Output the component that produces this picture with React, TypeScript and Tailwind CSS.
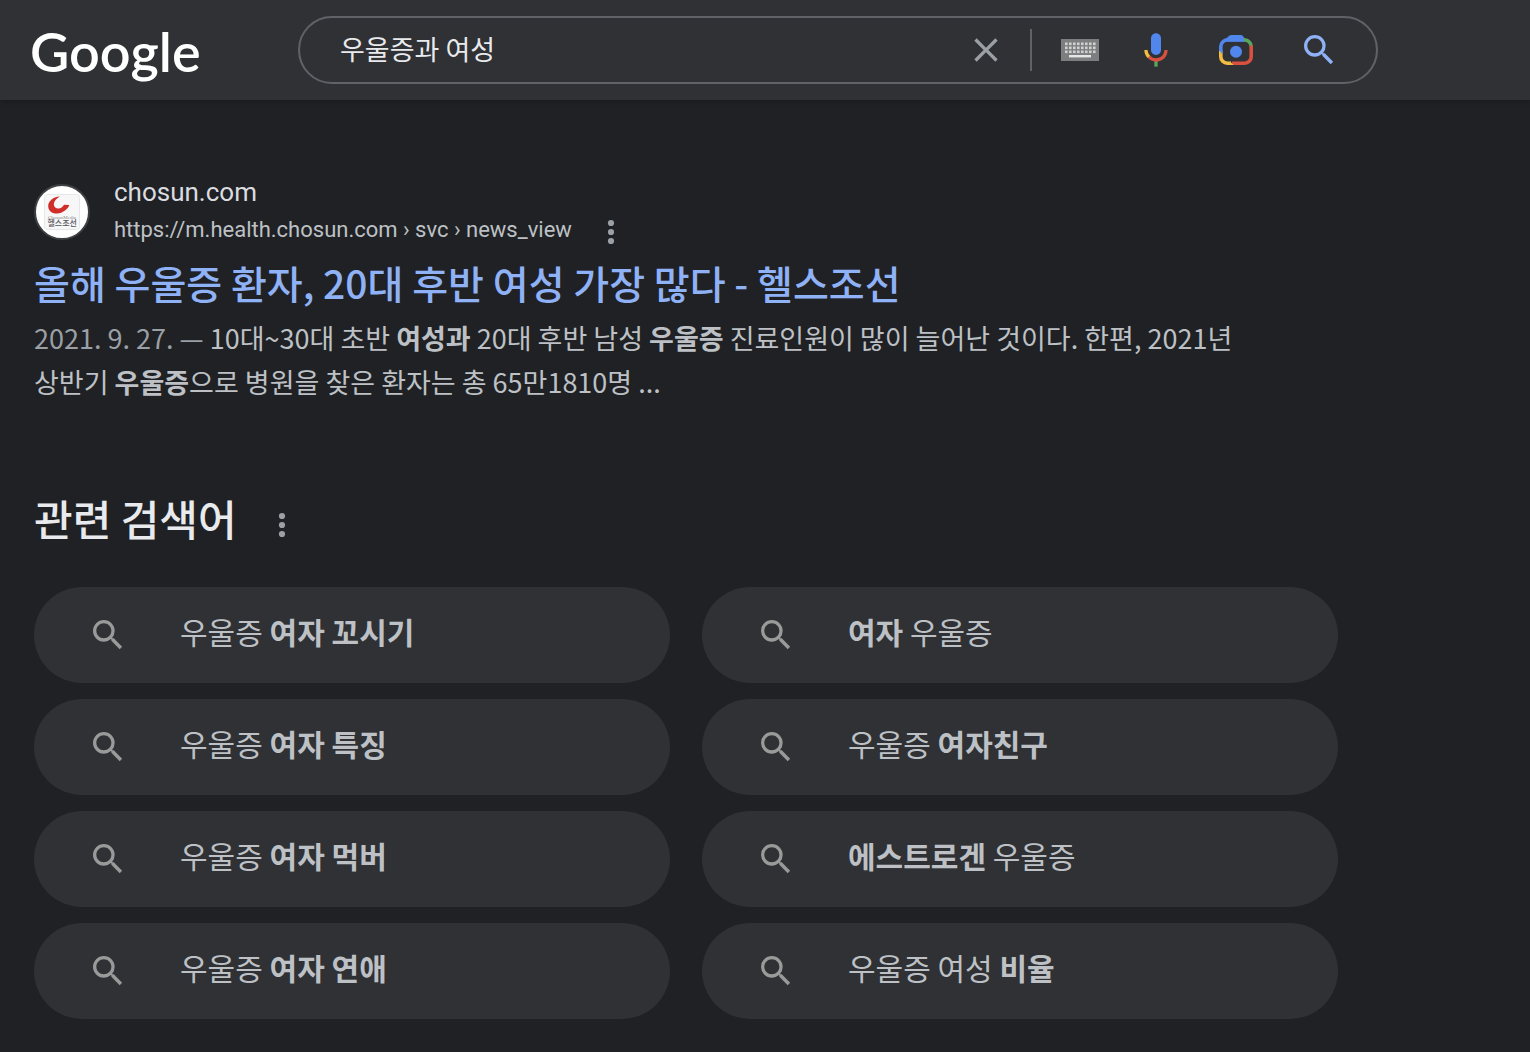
import React, { useState } from 'react';

interface Part {
  text: string;
  bold?: boolean;
}

const related: Part[][] = [
  [{ text: '우울증 ' }, { text: '여자 꼬시기', bold: true }],
  [{ text: '여자', bold: true }, { text: ' 우울증' }],
  [{ text: '우울증 ' }, { text: '여자 특징', bold: true }],
  [{ text: '우울증 ' }, { text: '여자친구', bold: true }],
  [{ text: '우울증 ' }, { text: '여자 먹버', bold: true }],
  [{ text: '에스트로겐', bold: true }, { text: ' 우울증' }],
  [{ text: '우울증 ' }, { text: '여자 연애', bold: true }],
  [{ text: '우울증 여성 ' }, { text: '비율', bold: true }],
];

const SearchIcon = ({ className }: { className: string }) => (
  <svg viewBox="0 0 24 24" fill="currentColor" aria-hidden="true" className={className}>
    <path d="M15.5 14h-.79l-.28-.27A6.471 6.471 0 0 0 16 9.5 6.5 6.5 0 1 0 9.5 16c1.61 0 3.09-.59 4.23-1.57l.27.28v.79l5 4.99L20.49 19l-4.99-5zm-6 0C7.01 14 5 11.99 5 9.5S7.01 5 9.5 5 14 7.01 14 9.5 11.99 14 9.5 14z" />
  </svg>
);

const CloseIcon = () => (
  <svg viewBox="0 0 24 24" fill="currentColor" aria-hidden="true" className="size-10">
    <path d="M19 6.41L17.59 5 12 10.59 6.41 5 5 6.41 10.59 12 5 17.59 6.41 19 12 13.41 17.59 19 19 17.59 13.41 12z" />
  </svg>
);

const KeyboardIcon = () => (
  <svg viewBox="0 0 38 22" aria-hidden="true" className="h-[22px] w-[38px]">
    <rect width="38" height="22" fill="#7d7e7f" />
    {[4, 8, 12].map((y) =>
      [4, 8, 12, 16, 20, 24, 28, 32].map((x) => (
        <rect key={`${x}-${y}`} x={x} y={y - 0.5} width="2.6" height="2.6" fill="#d0d0d0" />
      ))
    )}
    <rect x="8" y="16" width="22" height="2.4" fill="#e6e6e6" />
  </svg>
);

const MicIcon = () => (
  <svg viewBox="0 0 24 24" aria-hidden="true" className="size-10">
    <path fill="#5186ec" d="M12 15c1.66 0 3-1.31 3-2.97V5.01C15 3.35 13.66 2 12 2S9 3.34 9 5.01v7.02C9 13.69 10.34 15 12 15z" />
    <path fill="#58a55c" d="M11 18.08h2V22h-2z" />
    <path fill="#f2be42" d="M7.05 16.87C5.78 15.54 5 14.04 5 12h2c0 1.45.56 2.42 1.47 3.38v.32l-1.15 1.18z" />
    <path fill="#d85140" d="M12 16.93a4.97 5.25 0 0 1-3.54-1.55l-1.41 1.49C8.31 18.21 10.07 19 12 19c3.87 0 6.99-2.92 6.99-7H17c0 2.92-2.24 4.93-5 4.93z" />
  </svg>
);

const LensIcon = () => (
  <svg viewBox="0 0 40 40" fill="none" strokeWidth="3.6" aria-hidden="true" className="size-10">
    <path stroke="#5186ec" d="M4.8 21.5V16.5a6.5 6.5 0 0 1 6.5-6.5H28" />
    <path fill="#5186ec" d="M9.5 9l4-3.4Q14.3 5 15.3 5h9.4q1 0 1.8.6L31 11.5H9.5z" />
    <path stroke="#58a55c" d="M28 10h.7a6.5 6.5 0 0 1 6.5 6.5" />
    <path fill="#58a55c" d="M27 8.2h2l3.5 3.3h-2.5z" />
    <path stroke="#d85140" d="M35.2 15.5V26.7a6.5 6.5 0 0 1-6.5 6.5H16" />
    <path stroke="#f2be42" d="M4.8 21V26.7a6.5 6.5 0 0 0 6.5 6.5H15" />
    <path fill="#5186ec" d="M3 20h3.6v4.5z" />
    <path fill="#f2be42" d="M14 31.4l3.6 3.6H14z" />
    <circle cx="20" cy="21.7" r="6" fill="#5186ec" />
  </svg>
);

const MoreButton = ({ label }: { label: string }) => (
  <button type="button" aria-label={label} className="flex h-8 w-6 items-center justify-center pt-1 text-[#9aa0a6]">
    <svg viewBox="0 0 8 26" fill="currentColor" aria-hidden="true" className="h-[26px] w-2 shrink-0">
      <circle cx="4" cy="4" r="3.1" />
      <circle cx="4" cy="13" r="3.1" />
      <circle cx="4" cy="22" r="3.1" />
    </svg>
  </button>
);

const Favicon = () => (
  <svg viewBox="0 0 56 56" aria-hidden="true" className="size-14 shrink-0">
    <circle cx="28" cy="28" r="27" fill="#fff" stroke="#3c4043" strokeWidth="2" />
    <rect x="10.5" y="10.5" width="35" height="35" rx="3" fill="#f7f7f8" stroke="#e6e7ea" />
    <path fill="#cf2e2b" d="M26 12.5C18.5 13 14.2 17.5 14.2 22c0 5 4 7.8 9 7.5 5.5-.3 10.5-4 12.1-8.5l-5.3-.2c-1.3 2.6-3.7 4-6.2 3.7-2.9-.3-4.3-2.3-3.9-4.9.4-2.7 2.600-5.500 6.100-7.100z" />
    <text x="14" y="35" fontSize="5" fill="#8a8a8a" fontFamily="Liberation Serif, serif">ChosunMedia</text>
    <text x="13.5" y="42" fontSize="8" fontWeight="500" fill="#55565a" fontFamily="Noto Sans CJK KR, sans-serif">헬스조선</text>
  </svg>
);

const Header = () => {
  const [query, setQuery] = useState('우울증과 여성');

  return (
    <header className="flex h-[100px] items-center bg-[#303134] pl-[30px] pr-8 shadow-md">
      <a href="#" className="w-[268px] shrink-0 pt-1 font-['Lato',sans-serif] text-[54px] leading-[72px] font-semibold text-white">
        Google
      </a>
      <form
        role="search"
        onSubmit={(e) => e.preventDefault()}
        className="flex h-[68px] max-w-[1080px] flex-1 items-center rounded-full border-2 border-[#5f6368] pl-10 pr-[37px]"
      >
        <input
          type="text"
          aria-label="검색"
          value={query}
          onChange={(e) => setQuery(e.target.value)}
          className="h-10 min-w-0 flex-1 bg-transparent pb-1 text-[27px] leading-9 text-[#e8eaed] outline-none"
        />
        <button type="button" aria-label="지우기" onClick={() => setQuery('')} className="text-[#9aa0a6]">
          <CloseIcon />
        </button>
        <div className="mr-[29px] ml-6 h-[42px] w-0.5 bg-[#5f6368]" />
        <button type="button" aria-label="입력 도구" className="mr-[37px]">
          <KeyboardIcon />
        </button>
        <div className="flex items-center gap-10">
          <button type="button" aria-label="음성 검색">
            <MicIcon />
          </button>
          <button type="button" aria-label="이미지로 검색">
            <LensIcon />
          </button>
        </div>
        <button type="submit" aria-label="Google 검색" className="ml-[43px] text-[#8fb1f5]">
          <SearchIcon className="size-10" />
        </button>
      </form>
    </header>
  );
};

const Result = () => (
  <article>
    <div className="flex items-center gap-6">
      <Favicon />
      <div className="pb-1 font-['Roboto',sans-serif]">
        <div className="text-[26px] leading-10 text-[#dadce0]">chosun.com</div>
        <div className="flex items-center gap-[27px]">
          <cite className="text-[22px] leading-9 text-[#bdc1c6] not-italic">
            https://m.health.chosun.com › svc › news_view
          </cite>
          <MoreButton label="검색결과 정보" />
        </div>
      </div>
    </div>
    <h3 className="mb-1 text-[39px] leading-[60px] font-medium text-[#8fb1f5]">
      <a href="#">올해 우울증 환자, 20대 후반 여성 가장 많다 - 헬스조선</a>
    </h3>
    <p className="max-w-[1240px] text-[27px] leading-[44px] text-[#bdc1c6]">
      <span className="text-[#9aa0a6]">2021. 9. 27. — </span>
      10대~30대 초반 <b>여성과</b> 20대 후반 남성 <b>우울증</b> 진료인원이 많이 늘어난 것이다. 한편, 2021년{' '}
      <br className="hidden xl:inline" />
      상반기 <b>우울증</b>으로 병원을 찾은 환자는 총 65만1810명 ...
    </p>
  </article>
);

const RelatedSearches = () => (
  <section className="mt-20">
    <div className="flex items-center gap-[33px]">
      <h2 className="text-[42px] leading-[68px] font-medium text-[#e8eaed]">관련 검색어</h2>
      <div className="pt-2.5">
        <MoreButton label="관련 검색어 정보" />
      </div>
    </div>
    <div className="mt-[35px] grid max-w-[1304px] grid-cols-2 gap-x-8 gap-y-4">
      {related.map((parts, index) => (
        <a
          key={index}
          href="#"
          className="flex h-24 items-center gap-[52px] rounded-full bg-[#303134] pl-[54px] text-[30px] leading-[48px] text-[#bdc1c6]"
        >
          <SearchIcon className="size-10 shrink-0 text-[#9a9a9a]" />
          <span className="pb-2">
            {parts.map((part, i) => (part.bold ? <b key={i}>{part.text}</b> : part.text))}
          </span>
        </a>
      ))}
    </div>
  </section>
);

const App = () => (
  <div className="min-h-screen bg-[#202124] font-['Noto_Sans_CJK_KR',sans-serif]">
    <Header />
    <main className="px-[34px] pt-[72px] pb-8">
      <Result />
      <RelatedSearches />
    </main>
  </div>
);

export default App;
